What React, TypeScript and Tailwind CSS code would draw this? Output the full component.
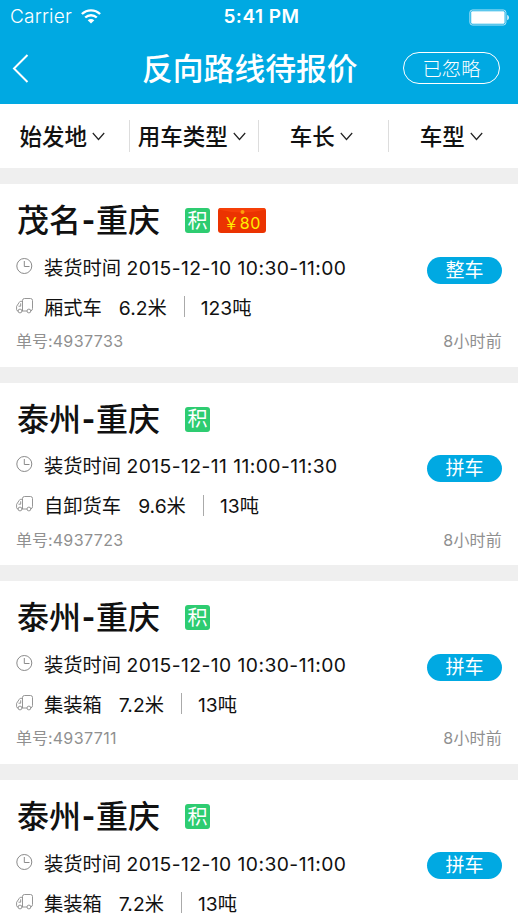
import React from 'react'

type Order = {
  id: string;
  from: string;
  to: string;
  bonus?: string;
  time: string;
  truck: string;
  length: string;
  weight: string;
  kind: string;
  ago: string;
}

const filters = ['始发地', '用车类型', '车长', '车型'];

const orders: Order[] = [
  { id: '4937733', from: '茂名', to: '重庆', bonus: '80', time: '2015-12-10 10:30-11:00', truck: '厢式车', length: '6.2米', weight: '123吨', kind: '整车', ago: '8小时前' },
  { id: '4937723', from: '泰州', to: '重庆', time: '2015-12-11 11:00-11:30', truck: '自卸货车', length: '9.6米', weight: '13吨', kind: '拼车', ago: '8小时前' },
  { id: '4937711', from: '泰州', to: '重庆', time: '2015-12-10 10:30-11:00', truck: '集装箱', length: '7.2米', weight: '13吨', kind: '拼车', ago: '8小时前' },
];

// last card runs past the bottom of the screen, its footer is not shown
const partialOrder: Order = { id: '', from: '泰州', to: '重庆', time: '2015-12-10 10:30-11:00', truck: '集装箱', length: '7.2米', weight: '13吨', kind: '拼车', ago: '' };

const WifiIcon = () => (
  <svg className="mb-px" width="20" height="15" viewBox="0 0 20 15" fill="none" stroke="white" strokeWidth="2.400">
    <path d="M.9 5C6 .1 14 .1 19.100 5" />
    <path d="M4.200 8.500c3.300-3.100 8.300-3.100 11.600 0" />
    <path d="M10 14.500l-3.300-3.300c1.900-1.700 4.700-1.700 6.600 0z" fill="white" stroke="none" />
  </svg>
)

const BatteryIcon = () => (
  <svg width="41" height="17" viewBox="0 0 41 17">
    <rect x="0.900" y="1" width="36" height="15" rx="2.500" fill="none" stroke="#b5e5f7" strokeWidth="1" />
    <rect x="2.200" y="2.300" width="33.400" height="12.400" rx="1.200" fill="white" />
    <path d="M38.300 6c2 .6 2 4.600 0 5.200z" fill="white" />
  </svg>
)

const ClockIcon = () => (
  <svg width="18" height="18" viewBox="0 0 18 18" fill="none" stroke="#8a8a8a" strokeWidth="1">
    <circle cx="8.300" cy="9" r="7.500" />
    <path d="M8.300 4v5.500h5.200" />
  </svg>
)

const TruckIcon = () => (
  <svg width="18" height="16" viewBox="0 0 18 16" fill="none" stroke="#8a8a8a" strokeWidth="0.900">
    <path d="M6.500 13V2.500q0-2 2-2h6q2 0 2 2v8q0 2-1.700 2.400M11 13H5.900" />
    <path d="M6.500 3.300H4.800q-1.200 0-1.800 1.400L.6 8.300v3.300q0 1.200 1.400 1.400M4.700 5.300v2.900H2.500" />
    <circle cx="4" cy="13" r="1.900" />
    <circle cx="12.900" cy="13" r="1.900" />
  </svg>
)

const OrderCard = ({ order }: { order: Order }) => (
  <div className="h-[182.3px] mt-[16.3px] pl-4 pr-4 pt-[14px] bg-white shrink-0">
    <div className="h-[45px] flex items-center pl-px">
      <h2 className="w-[168px] text-[32px] leading-[45px] font-medium">
        {order.from}<span className="inline-block w-[15px] text-center font-bold"><span className="inline-block scale-x-90">-</span></span>{order.to}
      </h2>
      <span className="w-[25px] h-[25px] flex items-center justify-center rounded-[3px] bg-[#2ecc71] text-white text-[20px] leading-none">积</span>
      {order.bonus && (
        <span className="relative ml-2 w-[48px] h-[25px] rounded-[3px] overflow-hidden bg-[#eb3301] text-[#ffef00] flex items-center justify-center">
          <svg className="absolute left-0 top-0" width="48" height="8" viewBox="0 0 48 8">
            <path d="M0 0h48v1.500q-24 6-48 0z" fill="#f53f08" />
            <circle cx="24.500" cy="4" r="2" fill="#ff9d0a" />
          </svg>
          <span className="relative pt-[5px] text-[16px] leading-[20px] tracking-[0.5px]">￥{order.bonus}</span>
        </span>
      )}
    </div>
    <div className="h-[40px] mt-[5px] flex items-center text-[19.3px]">
      <div className="w-[28px] pb-[5px]"><ClockIcon /></div>
      <p>装货时间 <span className="tracking-[0.43px]">{order.time}</span></p>
      <span className="ml-auto mt-[3.500px] w-[75px] h-[27px] rounded-full bg-[#00a9e2] text-white text-[19px] leading-[28px] text-center">{order.kind}</span>
    </div>
    <div className="h-[39px] pt-px flex items-center text-[19.3px]">
      <div className="w-[28px] pb-[5px]"><TruckIcon /></div>
      <p>{order.truck}</p>
      <p className="ml-[17px]">{order.length}</p>
      <span className="ml-[17px] mr-4 mb-[3px] w-px h-[21px] bg-[#aaa]"></span>
      <p>{order.weight}</p>
    </div>
    {order.id && (
      <div className="h-[28px] flex items-center justify-between text-[16px] text-[#909090]">
        <p>单号:<span className="tracking-[0.4px]">{order.id}</span></p>
        <p className="tracking-[0.2px]">{order.ago}</p>
      </div>
    )}
  </div>
)

const App = () => {
  return (
    <div className="w-[518px] h-[920px] overflow-hidden flex flex-col bg-[#efefef] text-[#111] whitespace-nowrap font-['Inter','Noto_Sans_CJK_SC',sans-serif]">
      <header className="h-[104px] shrink-0 bg-[#00a9e2] text-white">
        <div className="h-[34px] grid grid-cols-3 items-center pl-[10px] pr-[8px]">
          <div className="flex items-center gap-[9px] text-[19px]">
            <span className="font-light tracking-[0.2px]">Carrier</span>
            <WifiIcon />
          </div>
          <p className="text-center text-[19px] font-semibold tracking-[0.5px] pl-[3px]">5:41 PM</p>
          <div className="flex justify-end"><BatteryIcon /></div>
        </div>
        <div className="h-[70px] flex items-center pl-[12px] pr-[18px]">
          <button className="w-[130px]">
            <svg width="18" height="30" viewBox="0 0 18 30" fill="none" stroke="white" strokeWidth="2">
              <path d="M15.500 1L2 14.500 15.500 28" />
            </svg>
          </button>
          <h1 className="text-[30.8px] font-medium">反向路线待报价</h1>
          <button className="ml-auto mb-[2px] w-[97px] h-[32px] rounded-full border-[1.500px] border-white text-[19.3px] leading-[32px] font-light">已忽略</button>
        </div>
      </header>
      <nav className="h-[64px] shrink-0 bg-white grid grid-cols-4">
        {filters.map((name, i) => (
          <div key={name} className="flex items-center">
            <div className="flex-1 flex items-center justify-center gap-[5px] pt-px pr-[4px] text-[22.5px] font-medium">
              {name}
              <svg width="13" height="9" viewBox="0 0 13 9" fill="none" stroke="#222" strokeWidth="1.200">
                <path d="M.8 1l5.700 6.500L12.200 1" />
              </svg>
            </div>
            {i < filters.length - 1 && <span className="w-px h-[32px] bg-[#ddd]"></span>}
          </div>
        ))}
      </nav>
      {orders.map((order) => (
        <OrderCard key={order.id} order={order} />
      ))}
      <OrderCard order={partialOrder} />
    </div>
  );
}

export default App
